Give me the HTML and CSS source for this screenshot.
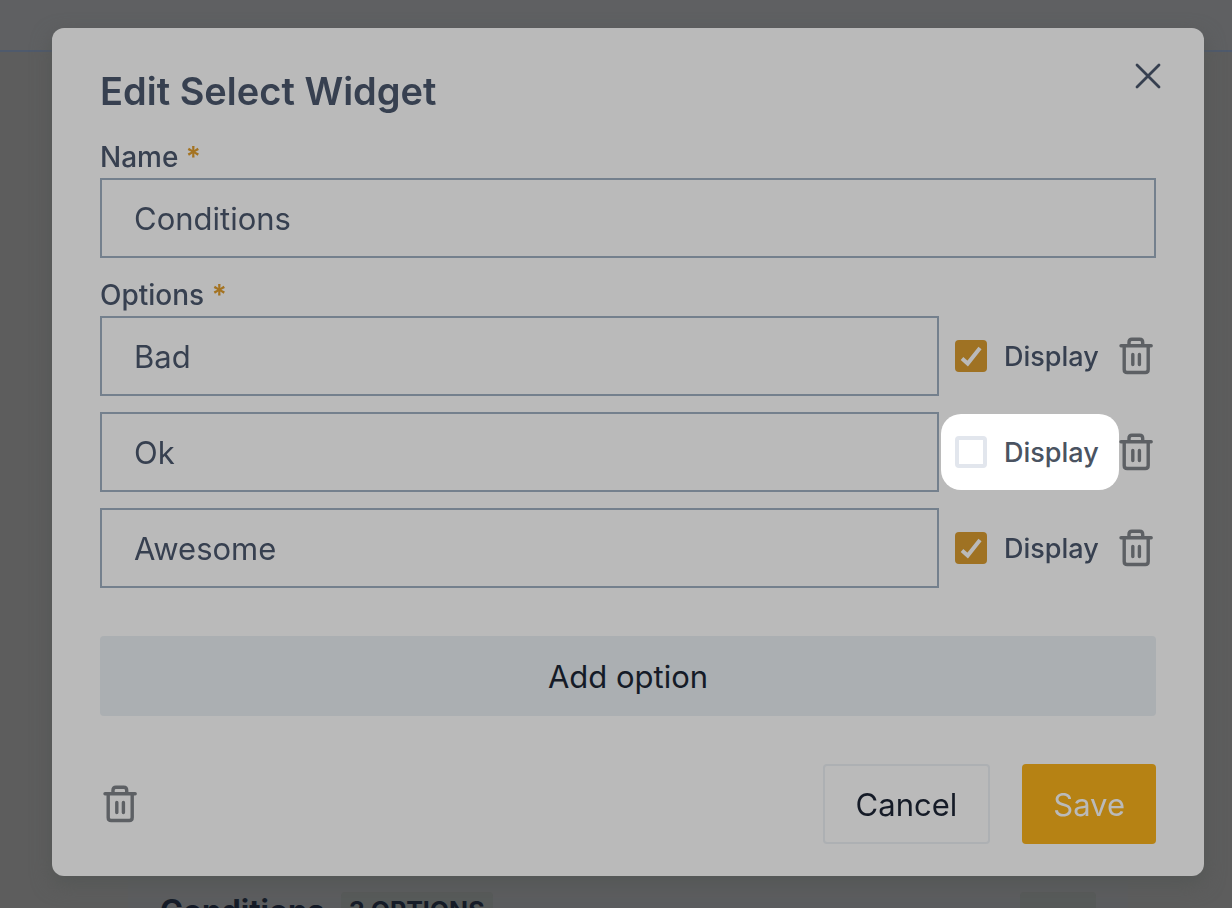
FILE: index.html
```html
<!DOCTYPE html>
<html lang="en">
<head>
<meta charset="utf-8">
<meta name="viewport" content="width=device-width, initial-scale=1">
<title>Edit Select Widget</title>
<link rel="stylesheet" href="styles.css">
</head>
<body>
<svg class="defs" aria-hidden="true">
  <symbol id="trash" viewBox="1 0 35 40" overflow="visible">
    <path d="M1 9.700H31.200M9 9.700V6.200Q9 3.200 12 3.200H19.700Q22.700 3.200 22.700 6.200V9.700M4.200 9.700V33.500Q4.200 36.500 7.200 36.500H25.200Q28.200 36.500 28.200 33.500V9.700M12.800 18.500V28.500M19.400 18.500V28.500" fill="none" stroke="currentColor" stroke-width="3.400" stroke-linecap="round" stroke-linejoin="round"/>
  </symbol>
</svg>
<div class="page">
  <header class="topbar"></header>
  <main class="board">
    <section class="card">
      <h2 class="card-title">Conditions</h2>
      <span class="badge">3 OPTIONS</span>
      <span class="card-action"></span>
    </section>
  </main>
</div>
<div class="overlay">
  <form class="modal" role="dialog" aria-labelledby="title">
    <div class="head">
      <h1 class="title" id="title">Edit Select Widget</h1>
      <button class="close" type="button" aria-label="Close">
        <svg width="28" height="28" viewBox="0 0 28 28"><path d="M3 3L25 25M25 3L3 25" fill="none" stroke="currentColor" stroke-width="2.800" stroke-linecap="round"/></svg>
      </button>
    </div>
    <label class="label" for="name">Name <span class="star">*</span></label>
    <input class="field" id="name" type="text" value="Conditions">
    <label class="label" for="option-1">Options <span class="star">*</span></label>
    <div class="options">
      <div class="option">
        <input class="field" id="option-1" type="text" value="Bad">
        <label class="display"><input class="check" type="checkbox" checked>Display</label>
        <button class="trash" type="button" aria-label="Delete option"><svg width="35" height="40"><use href="#trash"/></svg></button>
      </div>
      <div class="option">
        <input class="field" type="text" value="Ok" aria-label="Option 2">
        <label class="display spotlight"><input class="check" type="checkbox">Display</label>
        <button class="trash" type="button" aria-label="Delete option"><svg width="35" height="40"><use href="#trash"/></svg></button>
      </div>
      <div class="option">
        <input class="field" type="text" value="Awesome" aria-label="Option 3">
        <label class="display"><input class="check" type="checkbox" checked>Display</label>
        <button class="trash" type="button" aria-label="Delete option"><svg width="35" height="40"><use href="#trash"/></svg></button>
      </div>
    </div>
    <button class="button add" type="button">Add option</button>
    <div class="footer">
      <button class="trash delete" type="button" aria-label="Delete widget"><svg width="35" height="40"><use href="#trash"/></svg></button>
      <button class="button cancel" type="button">Cancel</button>
      <button class="button save" type="submit">Save</button>
    </div>
  </form>
</div>
</body>
</html>
```
FILE: styles.css
```css
* { box-sizing: border-box; }
body {
  margin: 0;
  font-family: Inter, "Liberation Sans", sans-serif;
  color: #374050;
  background: #5d5d5d;
  overflow: hidden;
}
h1, h2 { margin: 0; }
button, input { font: inherit; color: inherit; margin: 0; }
button { border: 0; padding: 0; background: none; cursor: pointer; }
svg { display: block; overflow: visible; }
.defs { position: absolute; width: 0; height: 0; }

.page { height: 100vh; display: flex; flex-direction: column; }
.topbar { height: 52px; flex: none; background: #5f6062; border-bottom: 2px solid #4f5a6c; }
.board { flex: 1; display: flex; flex-direction: column; justify-content: flex-end; padding: 0 104px 0 128px; }
.card {
  height: 32px;
  display: flex;
  align-items: flex-start;
  gap: 16px;
  padding: 16px 32px 0;
  background: #5c5d5f;
}
.card-title { font-size: 31px; line-height: 38px; font-weight: 700; color: #151b27; }
.badge { padding: 0 8px; border-radius: 4px; background: #575a59; font-size: 25px; line-height: 38px; font-weight: 700; color: #151b27; }
.card-action { width: 76px; height: 32px; margin-left: auto; border-radius: 4px; background: #575a59; }

.overlay { position: fixed; inset: 0; padding: 28px 28px 28px 52px; }
.modal {
  display: flex;
  flex-direction: column;
  padding: 32px 48px;
  border-radius: 12px;
  background: #bababa;
  box-shadow: 0 8px 20px #545756;
}
.head { display: flex; justify-content: space-between; align-items: flex-start; height: 80px; }
.title { padding-top: 7px; font-size: 38px; line-height: 48px; font-weight: 600; }
.close { margin: 2px -6px 0 0; }
.label { height: 38px; font-size: 28px; line-height: 34px; font-weight: 500; }
.star { color: #a47321; font-weight: 600; }
.field {
  width: 100%;
  min-width: 0;
  height: 80px;
  padding: 0 32px;
  border: 2px solid #74808d;
  border-radius: 0;
  background: transparent;
  font-size: 31px;
}
.field + .label { margin-top: 20px; }
.options { display: grid; gap: 16px; }
.option { display: grid; grid-template-columns: 1fr 178px 35px; align-items: center; column-gap: 2px; }
.display {
  display: flex;
  align-items: center;
  gap: 17px;
  height: 76px;
  padding-left: 14px;
  border-radius: 20px;
  font-size: 27px;
  font-weight: 500;
}
.spotlight { background: #fff; color: #4a5361; }
.check {
  appearance: none;
  width: 32px;
  height: 32px;
  flex: none;
  border: 4px solid #e2e6ed;
  border-radius: 4px;
}
.check:checked {
  border: 0;
  background: #9f7223 url("data:image/svg+xml,%3Csvg xmlns='http://www.w3.org/2000/svg' viewBox='0 0 32 32'%3E%3Cpath d='M7 18.500L12.700 23.500L25 8' fill='none' stroke='%23bababa' stroke-width='4'/%3E%3C/svg%3E");
}
.trash { color: #5d6064; }
.button { height: 80px; padding: 0 31px; border-radius: 4px; font-size: 31px; }
.add { margin-top: 48px; background: #abafb2; color: #151b27; }
.footer { display: flex; align-items: center; gap: 32px; margin-top: 48px; }
.delete { margin: 0 auto 0 5px; }
.cancel { border: 2px solid #adb0b3; color: #151b27; }
.save { background: #b68214; color: #bababa; }
```
